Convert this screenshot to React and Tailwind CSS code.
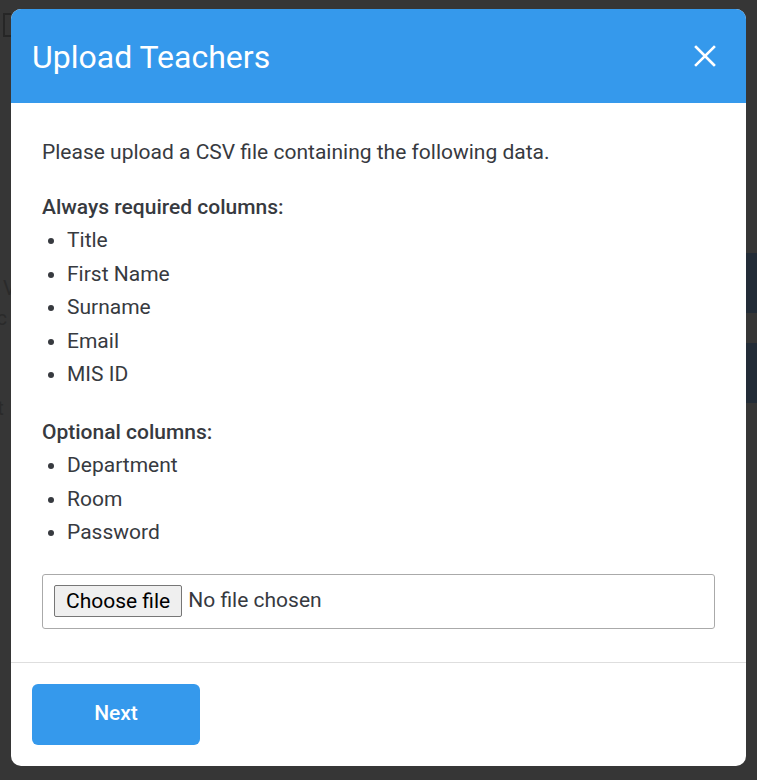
import React from 'react';

const requiredColumns = ['Title', 'First Name', 'Surname', 'Email', 'MIS ID'];
const optionalColumns = ['Department', 'Room', 'Password'];

const ColumnList = ({ items }) => (
    <ul className="list-disc pl-[25px]">
        {items.map(item => (
            <li key={item}>{item}</li>
        ))}
    </ul>
);

const BackgroundPage = () => (
    <div className="flex h-[780px] justify-between">
        <div className="w-[11px] overflow-hidden pt-[13px] text-[20px] leading-[30px] text-[#2a2a2a]">
            <div className="h-[24px] w-[10px] ml-[3px] border-2 border-[#262626]"></div>
            <div className="mt-[236px] ml-[-6px] whitespace-nowrap">, V</div>
            <div className="ml-[-10px] whitespace-nowrap">rc</div>
            <div className="mt-[60px] ml-[-10px] whitespace-nowrap">rt</div>
        </div>
        <div className="w-[11px] pt-[253px] flex flex-col gap-[30px]">
            <div className="h-[60px] bg-[#232c37]"></div>
            <div className="h-[60px] bg-[#232c37]"></div>
        </div>
    </div>
);

export default function App() {
    return (
        <div
            className="relative h-[780px] overflow-hidden bg-[#363636]"
            style={{ fontFamily: 'Roboto, "Noto Sans", sans-serif' }}
        >
            <BackgroundPage />

            {/* modal */}
            <div className="absolute left-[11px] top-[9px] w-[735px] rounded-[10px] overflow-hidden bg-white text-[#373a3f]">
                <div className="h-[94px] bg-[#3599ec] flex items-center justify-between pl-[21px] pr-[27px]">
                    <h2 className="text-[32px] font-normal text-white leading-none mt-[2px]">Upload Teachers</h2>
                    <button className="text-white p-[2px]" aria-label="Close">
                        <svg width="24" height="24" viewBox="0 0 24 24" fill="none" stroke="currentColor" strokeWidth="2.6" strokeLinecap="square">
                            <path d="M3 3 L21 21 M21 3 L3 21" />
                        </svg>
                    </button>
                </div>

                <div className="px-[31px] pt-[33px] pb-[33px] text-[21px] leading-[33.5px]">
                    <p>Please upload a CSV file containing the following data.</p>

                    <h3 className="mt-[21px] font-medium">Always required columns:</h3>
                    <ColumnList items={requiredColumns} />

                    <h3 className="mt-[24px] font-medium">Optional columns:</h3>
                    <ColumnList items={optionalColumns} />

                    <div className="mt-[24px] h-[55px] border border-[#aaaaaa] rounded-[3px] flex items-center pl-[11px]">
                        <button className="h-[32px] px-[11px] bg-[#efefef] border border-[#767676] rounded-[2px] text-black text-[21px] leading-none">
                            Choose file
                        </button>
                        <span className="ml-[6px] text-[#373a3f]">No file chosen</span>
                    </div>
                </div>

                <div className="border-t border-[#dedede] px-[21px] pt-[21px] pb-[21px]">
                    <button className="w-[168px] h-[61px] rounded-[6px] bg-[#3599ec] text-white text-[21px] font-medium">
                        Next
                    </button>
                </div>
            </div>
        </div>
    );
}
